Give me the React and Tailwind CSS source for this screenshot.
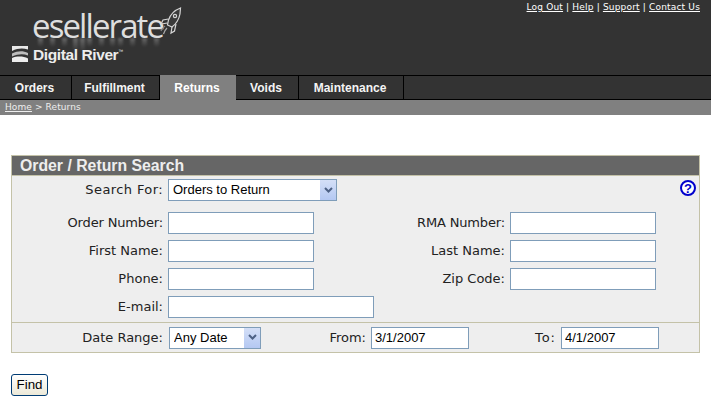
import { useState } from "react";

const tabs = [
  { name: "Orders", w: "w-[72px]" },
  { name: "Fulfillment", w: "w-[88px]" },
  { name: "Returns", w: "w-[76px]", active: true },
  { name: "Voids", w: "w-[63px]" },
  { name: "Maintenance", w: "w-[105px]" },
];

function Rocket() {
  return (
    <svg width="22" height="32" viewBox="0 0 22 32" fill="none" stroke="#d4d4d4" strokeWidth="1.2" className="absolute left-[160px] top-[7px]">
      <path d="M20.5 1 C15 3 10.5 7 8.5 13 L7.5 18 L12 20 C16 17 19 12 20 7 Z" fill="#3a3a3a" />
      <circle cx="15" cy="9" r="1.6" />
      <path d="M8.5 12 L3 13 L1 17 L7.5 16" />
      <path d="M12 20 L11 26 L14.5 24 L16 17" />
      <path d="M7 21 C5 23 4 25 3.5 27" stroke="#aaa" />
      <path d="M5 19 C3 21 1.5 22 1 24" stroke="#888" />
    </svg>
  );
}

function RiverMark() {
  return (
    <svg width="16" height="18" viewBox="0 0 16 18" className="absolute left-[12px] top-[45px]">
      <path d="M0 1 H16 V4.5 C11 3 6 3 0 6 Z" fill="#e8e8e8" />
      <path d="M0 8.5 C6 5.5 11 5.5 16 8 V10.5 C11 8.5 6 9 0 11.5 Z" fill="#bdbdbd" />
      <path d="M0 13 C5 11 11 11 16 13.5 V17 H0 Z" fill="#eeeeee" />
    </svg>
  );
}

// faint mirror of the wordmark under the logo, just soft strokes
function Reflection() {
  const strokes = [4, 16, 28, 39, 46, 53, 65, 76, 84, 96, 108, 120];
  return (
    <svg width="130" height="14" viewBox="0 0 130 14" className="absolute left-[34px] top-[38px] blur-[0.8px]">
      <defs>
        <linearGradient id="fade" x1="0" y1="0" x2="0" y2="1">
          <stop offset="0" stopColor="#bbb" stopOpacity="0.4" />
          <stop offset="1" stopColor="#bbb" stopOpacity="0" />
        </linearGradient>
      </defs>
      {strokes.map((x) => (
        <rect key={x} x={x} y="0" width="5" height={x === 39 || x === 46 ? 14 : 9} fill="url(#fade)" />
      ))}
    </svg>
  );
}

function Logo() {
  return (
    <div className="relative h-[75px] w-[240px] overflow-hidden">
      <span className="absolute left-[32px] top-[8px] font-['Open_Sans',sans-serif] text-[33px] font-medium leading-[36px] tracking-[-1.9px] text-[#dedede]">
        esellerate
      </span>
      <Reflection />
      <Rocket />
      <RiverMark />
      <span className="absolute left-[33px] top-[45px] font-['Liberation_Sans',sans-serif] text-[15.5px] font-bold leading-[20px] tracking-[-0.4px] text-[#ececec]">
        Digital River<span className="align-top text-[5px] font-normal leading-[12px] tracking-normal">™</span>
      </span>
    </div>
  );
}

function Field({ width = "w-[146px]", value = "" }) {
  return (
    <input
      type="text"
      defaultValue={value}
      className={`${width} h-[22px] border border-[#7f9db9] bg-white px-[3px] font-['Liberation_Sans',sans-serif] text-[13px] text-black outline-none`}
    />
  );
}

function Dropdown({ width, value, options }) {
  const [current, setCurrent] = useState(value);
  return (
    <div className={`relative ${width} h-[22px]`}>
      <select
        value={current}
        onChange={(e) => setCurrent(e.target.value)}
        className="block h-full w-full appearance-none border border-[#7f9db9] bg-white pl-[4px] font-['Liberation_Sans',sans-serif] text-[13px] text-black outline-none"
      >
        {options.map((o) => (
          <option key={o}>{o}</option>
        ))}
      </select>
      <span className="pointer-events-none absolute right-[1px] top-[1px] flex h-[20px] w-[16px] items-center justify-center bg-gradient-to-b from-[#d4dff7] to-[#b4c8f2]">
        <svg width="9" height="7" viewBox="0 0 9 7" fill="none" stroke="#4d6185" strokeWidth="2">
          <path d="M1 1 L4.5 4.5 L8 1" />
        </svg>
      </span>
    </div>
  );
}

function Label({ children, className = "" }) {
  return (
    <label className={`${className} mr-[5px] text-right font-['DejaVu_Sans',sans-serif] text-[13px] text-[#222]`}>
      {children}
    </label>
  );
}

export default function App() {
  return (
    <div className="min-h-[405px] bg-white">
      {/* top banner */}
      <div className="bg-[#333333]">
        <div className="flex h-[75px] items-start justify-between">
          <Logo />
          <div className="mr-[11px] mt-px font-['DejaVu_Sans',sans-serif] text-[9px] leading-[12px] tracking-[0.18px] text-white">
            <a href="#" className="underline">Log Out</a> | <a href="#" className="underline">Help</a> |{" "}
            <a href="#" className="underline">Support</a> | <a href="#" className="underline">Contact Us</a>
          </div>
        </div>
        <div className="flex h-[25px] border-t border-black">
          {tabs.map((t) => (
            <div
              key={t.name}
              className={`${t.w} flex items-center justify-center pr-[2px] font-['Liberation_Sans',sans-serif] text-[12px] font-bold ${
                t.active ? "-mt-px bg-[#808080] pt-px text-white" : "border-r border-b border-black text-[#f4f4f4]"
              }`}
            >
              {t.name}
            </div>
          ))}
          <div className="flex-1 border-b border-black" />
        </div>
      </div>
      {/* breadcrumb */}
      <div className="h-[15px] bg-[#808080] pl-[5px] font-['DejaVu_Sans',sans-serif] text-[9px] leading-[15px] tracking-[0.1px] text-[#eeeeee]">
        <a href="#" className="underline">Home</a> &gt; Returns
      </div>

      {/* search panel */}
      <div className="mx-[11px] mt-[40px] w-[689px] border border-[#c4c2a8] bg-[#eeeeee]">
        <div className="h-[20px] border-b border-[#c4c2a8] bg-[#666666] pl-[8px] font-['Liberation_Sans',sans-serif] text-[15.8px] font-bold leading-[20px] text-[#eeeeee]">
          Order / Return Search
        </div>
        <div className="h-[146px] pt-[3px]">
          <div className="flex items-center">
            <Label className="w-[151px] tracking-[0.4px]">Search For:</Label>
            <Dropdown width="w-[169px]" value="Orders to Return" options={["Orders to Return", "Orders", "Returns"]} />
            <span className="ml-auto mr-[3px] mt-px flex h-[16px] w-[16px] items-center justify-center self-start rounded-full border-2 border-[#0000cc] bg-white font-['Liberation_Sans',sans-serif] text-[13px] font-bold leading-none text-[#0000cc]">
              ?
            </span>
          </div>
          <div className="mt-[11px] flex flex-col gap-[6px]">
            <div className="flex items-center">
              <Label className="w-[151px] tracking-[-0.15px]">Order Number:</Label>
              <Field />
              <Label className="w-[191px] tracking-[-0.15px]">RMA Number:</Label>
              <Field />
            </div>
            <div className="flex items-center">
              <Label className="w-[151px]">First Name:</Label>
              <Field />
              <Label className="w-[191px]">Last Name:</Label>
              <Field />
            </div>
            <div className="flex items-center">
              <Label className="w-[151px]">Phone:</Label>
              <Field />
              <Label className="w-[191px]">Zip Code:</Label>
              <Field />
            </div>
            <div className="flex items-center">
              <Label className="w-[151px]">E-mail:</Label>
              <Field width="w-[206px]" />
            </div>
          </div>
        </div>
        <div className="flex h-[30px] items-center border-t border-[#c4c2a8]">
          <Label className="w-[151px]">Date Range:</Label>
          <div className="ml-px">
            <Dropdown width="w-[92px]" value="Any Date" options={["Any Date", "Today", "This Week"]} />
          </div>
          <Label className="w-[105px]">From:</Label>
          <Field width="w-[98px]" value="3/1/2007" />
          <Label className="w-[87px] tracking-[1px]">To:</Label>
          <Field width="w-[98px]" value="4/1/2007" />
        </div>
      </div>

      <button className="ml-[11px] mt-[21px] h-[22px] w-[37px] rounded-[3px] border border-[#003c74] bg-gradient-to-b from-white to-[#ece9d8] font-['Liberation_Sans',sans-serif] text-[13.33px] text-black">
        Find
      </button>
    </div>
  );
}
